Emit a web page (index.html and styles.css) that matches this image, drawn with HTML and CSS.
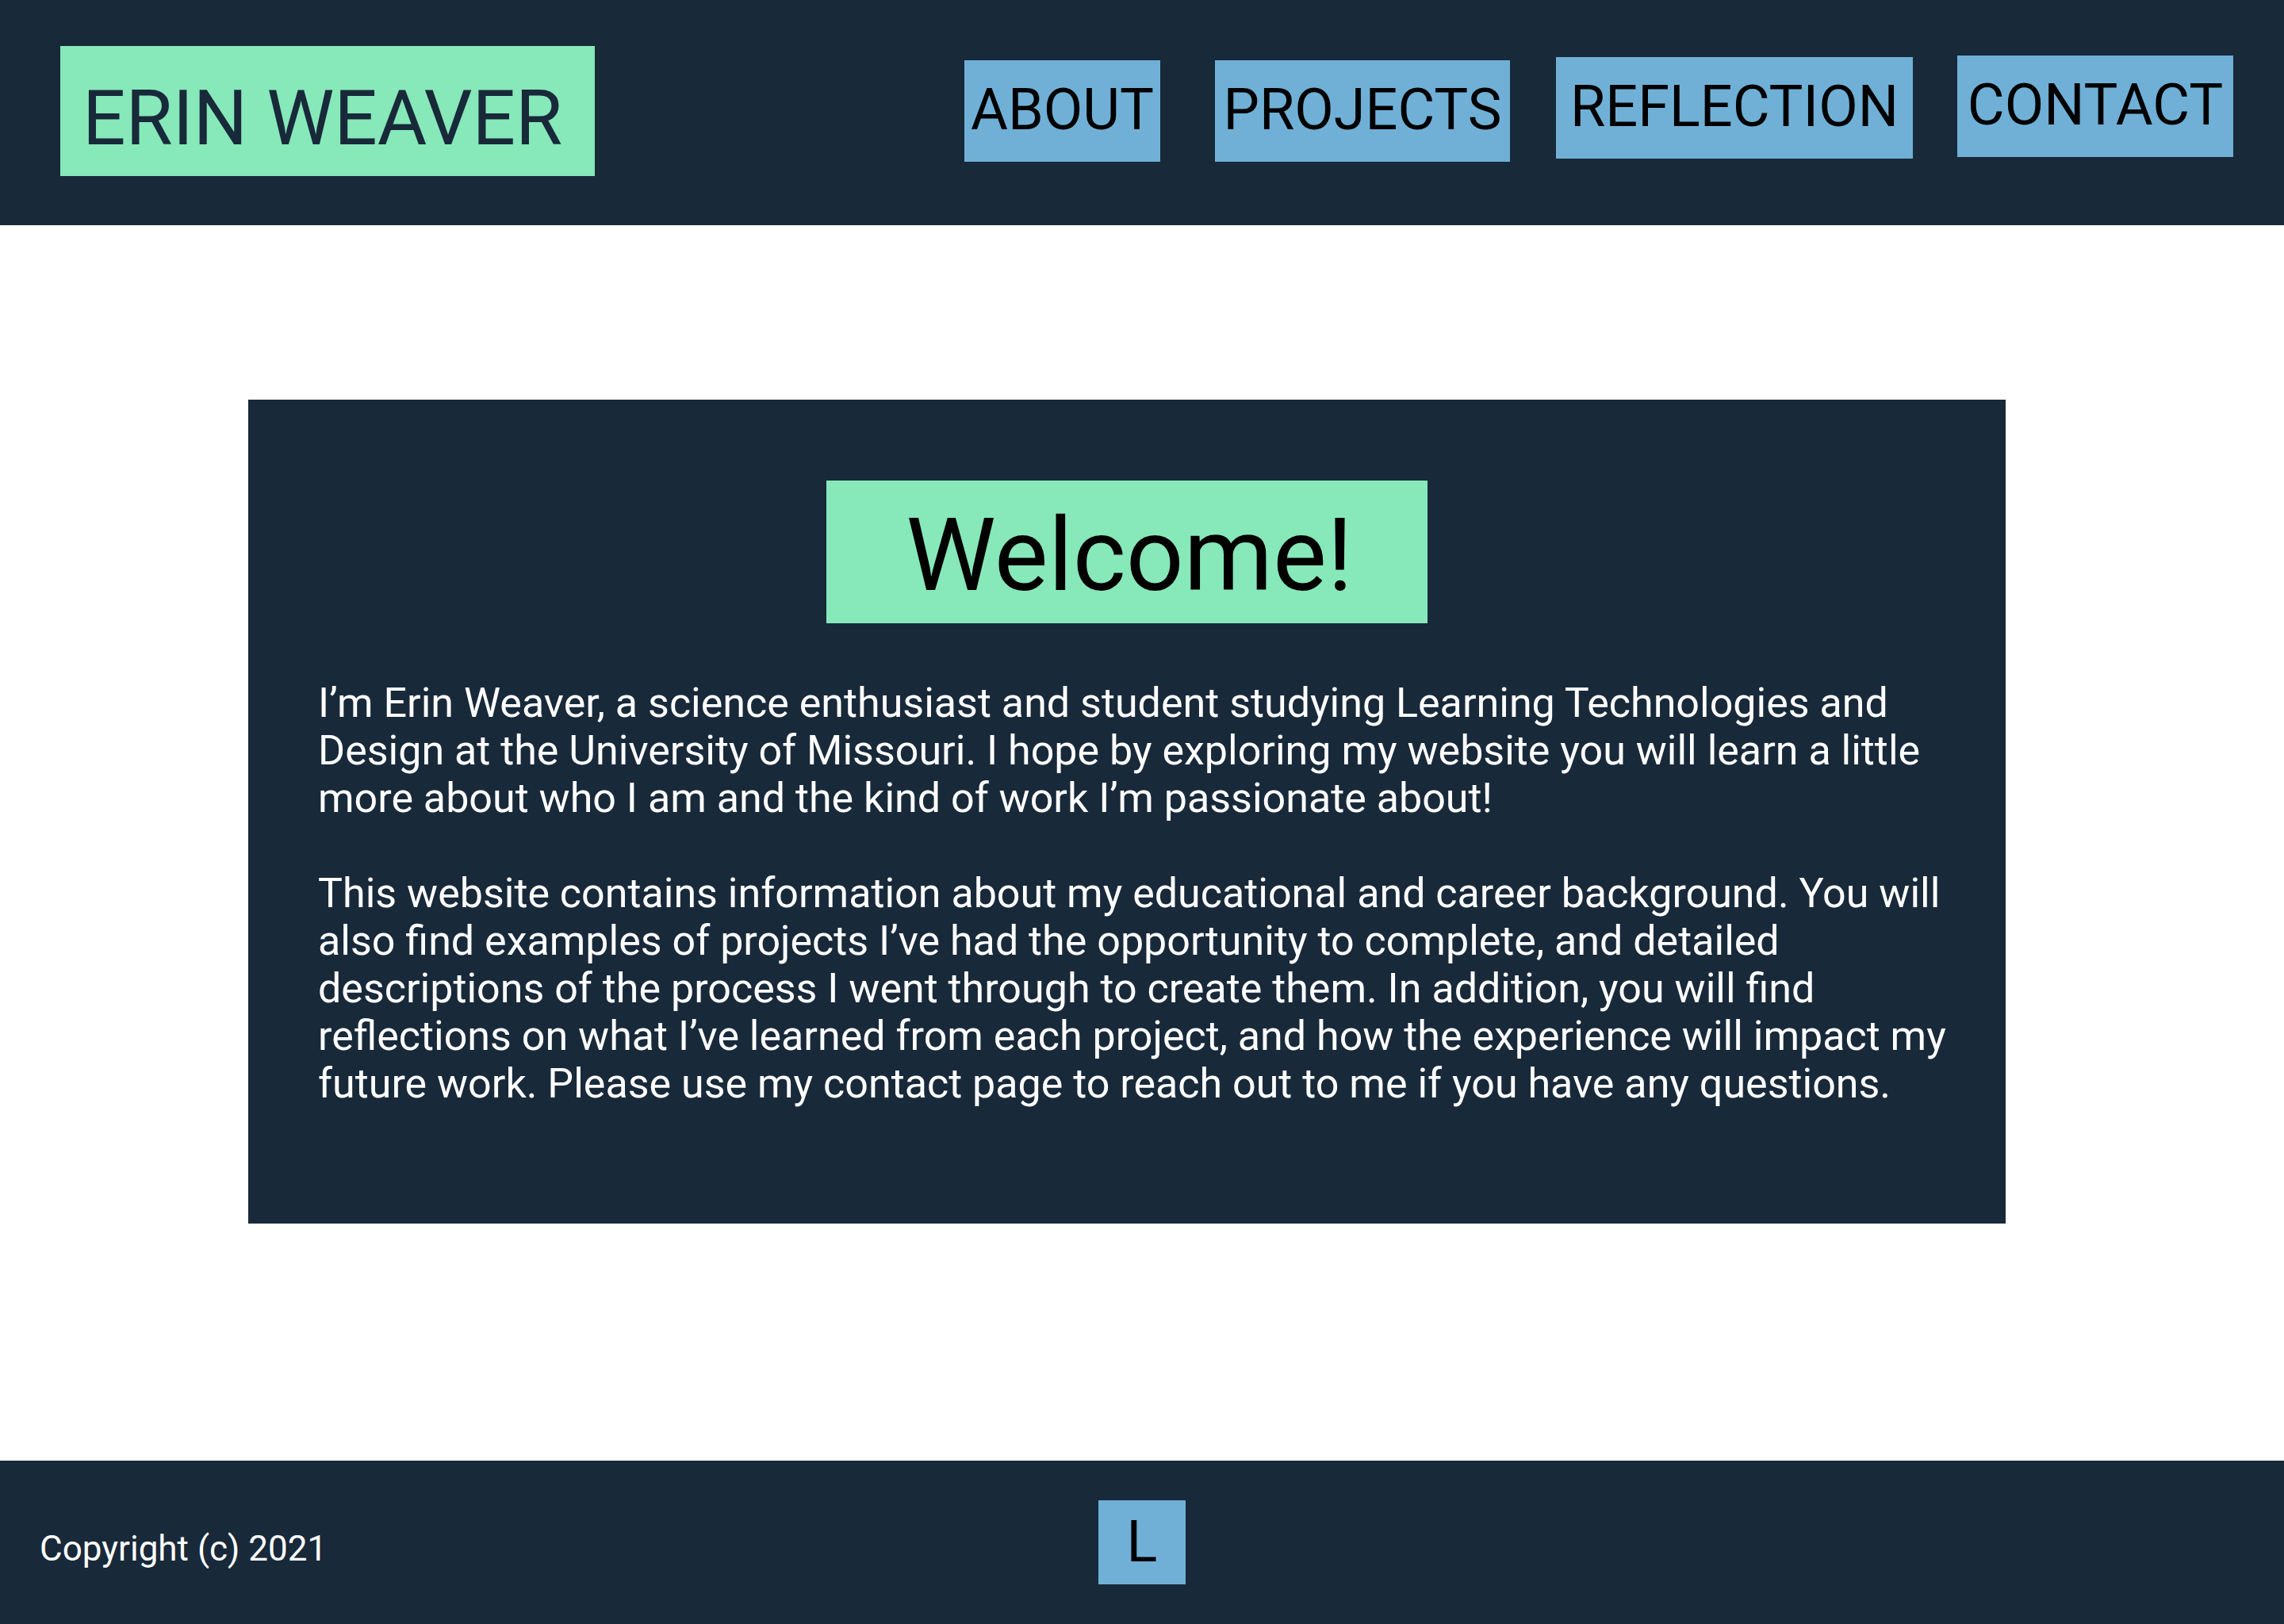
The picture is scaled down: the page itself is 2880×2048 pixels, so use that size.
FILE: index.html
```html
<!DOCTYPE html>
<html lang="en">
<head>
<meta charset="utf-8">
<title>Erin Weaver</title>
<link rel="stylesheet" href="styles.css">
</head>
<body>
<header class="site-header">
  <h1 class="logo">ERIN WEAVER</h1>
  <nav class="nav">
    <a class="nav-item nav-about" href="#">ABOUT</a>
    <a class="nav-item nav-projects" href="#">PROJECTS</a>
    <a class="nav-item nav-reflection" href="#">REFLECTION</a>
    <a class="nav-item nav-contact" href="#">CONTACT</a>
  </nav>
</header>
<main class="card">
  <h2 class="welcome">Welcome!</h2>
  <div class="intro">
    <p>I’m Erin Weaver, a science enthusiast and student studying Learning Technologies and Design at the University of Missouri. I hope by exploring my website you will learn a little more about who I am and the kind of work I’m passionate about!</p>
    <p>This website contains information about my educational and career background. You will also find examples of projects I’ve had the opportunity to complete, and detailed descriptions of the process I went through to create them. In addition, you will find reflections on what I’ve learned from each project, and how the experience will impact my future work. Please use my contact page to reach out to me if you have any questions.</p>
  </div>
</main>
<footer class="site-footer">
  <div class="copyright">Copyright (c) 2021</div>
  <a class="footer-link" href="#">L</a>
  <div class="footer-spacer"></div>
</footer>
</body>
</html>
```
FILE: styles.css
```css
html, body {
  margin: 0;
  padding: 0;
  background: #ffffff;
  font-family: Roboto, "Liberation Sans", sans-serif;
}

.site-header {
  box-sizing: border-box;
  height: 284px;
  background: #18293a;
  display: flex;
  justify-content: space-between;
  align-items: flex-start;
  padding: 58px 64px 0 76px;
}

.logo {
  box-sizing: border-box;
  margin: 0;
  width: 674px;
  height: 164px;
  padding: 35px 0 0 28px;
  background: #87e8b9;
  color: #18293a;
  font-size: 96px;
  font-weight: 400;
  line-height: 112px;
  white-space: nowrap;
}

.nav {
  display: flex;
  align-items: flex-start;
}

.nav-item {
  box-sizing: border-box;
  display: block;
  height: 128px;
  padding-top: 21px;
  background: #70b0d6;
  color: #000000;
  text-decoration: none;
  font-size: 72px;
  line-height: 84px;
  text-align: center;
  white-space: nowrap;
}

.nav-about { width: 247px; margin-top: 18px; }
.nav-projects { width: 372px; margin-top: 18px; margin-left: 69px; }
.nav-reflection { width: 450px; margin-top: 14px; margin-left: 58px; }
.nav-contact { width: 348px; margin-top: 12px; margin-left: 56px; }

.card {
  display: block;
  box-sizing: border-box;
  width: 2216px;
  height: 1039px;
  margin: 220px 0 0 313px;
  padding: 102px 0 0 0;
  background: #18293a;
}

.welcome {
  box-sizing: border-box;
  width: 758px;
  height: 180px;
  margin: 0 auto;
  padding: 19px 0 0 6px;
  background: #87e8b9;
  color: #000000;
  font-size: 128px;
  font-weight: 400;
  line-height: 150px;
  text-align: center;
}

.intro {
  margin-top: 71px;
  padding: 0 36px 0 88px;
  color: #ffffff;
  font-size: 52px;
  line-height: 60px;
}

.intro p {
  margin: 0;
}

.intro p + p {
  margin-top: 60px;
}

.site-footer {
  box-sizing: border-box;
  height: 206px;
  margin-top: 299px;
  background: #18293a;
  display: grid;
  grid-template-columns: 1fr auto 1fr;
  align-items: center;
  padding: 0 48px;
}

.copyright {
  padding: 16px 0 0 2px;
  color: #ffffff;
  font-size: 44px;
  white-space: nowrap;
}

.footer-link {
  box-sizing: border-box;
  display: block;
  width: 110px;
  height: 106px;
  padding-top: 11px;
  background: #70b0d6;
  color: #000000;
  text-decoration: none;
  font-size: 72px;
  line-height: 84px;
  text-align: center;
}
```
